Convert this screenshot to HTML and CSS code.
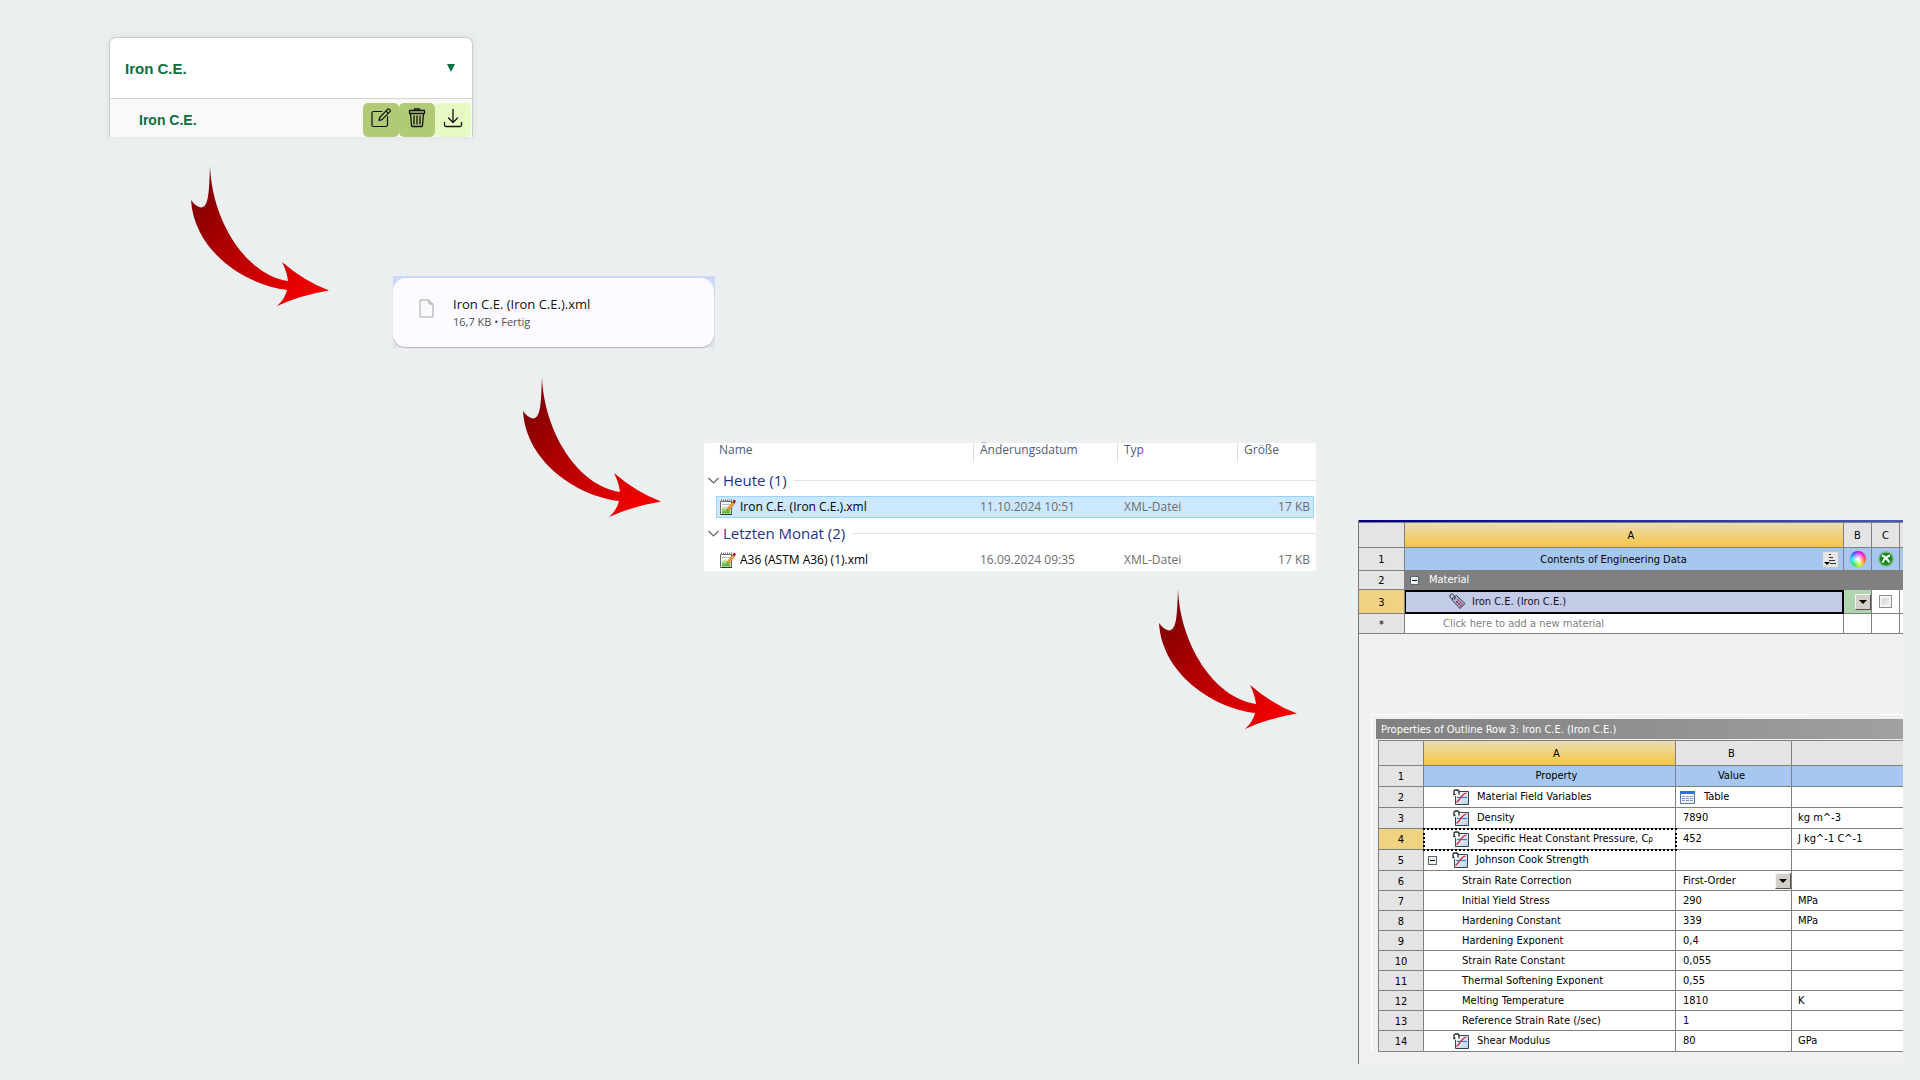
FILE: index.html
```html
<!DOCTYPE html>
<html lang="de">
<head>
<meta charset="utf-8">
<meta name="viewport" content="width=device-width, initial-scale=1">
<title>Material export workflow</title>
<link rel="stylesheet" href="styles.css">
</head>
<body>
<svg class="defs" width="0" height="0" aria-hidden="true">
  <defs>
    <linearGradient id="red" x1="0" y1="0" x2="1" y2="1">
      <stop offset="0.1" stop-color="#800000"/><stop offset="0.9" stop-color="#f40000"/>
    </linearGradient>
    <linearGradient id="green" x1="0" y1="0" x2="0" y2="1">
      <stop offset="0" stop-color="#f2fbd8"/><stop offset="1" stop-color="#3fae1c"/>
    </linearGradient>
    <linearGradient id="pale" x1="0" y1="0" x2="1" y2="1">
      <stop offset="0" stop-color="#fff"/><stop offset="1" stop-color="#bccfe4"/>
    </linearGradient>
    <symbol id="arrow" viewBox="0 0 160 155">
      <path fill="url(#red)" d="M30 5C32 60 66 114 108 120Q107 111 102 101Q124 120 149 129.500Q121 134 97 145Q105 138 107 129C65 124 14 90 11 39Q16 46 21 46.500C29 46 29 30 30 5Z"/>
    </symbol>
    <symbol id="notepad" viewBox="0 0 17 17">
      <path d="M1.500 2.500h11v13h-11z" fill="#fff" stroke="#666"/>
      <path d="M3 7h8.500v7.500H3z" fill="url(#green)"/>
      <path d="M2 1.500h11" stroke="#777" stroke-width="2" stroke-dasharray="1 1"/>
      <path d="M3 5.500h8" stroke="#bbb"/>
      <path d="M2 15.500h11" stroke="#333"/>
      <path d="M8 12l1-3 4.500-6 2 1.500L11 10.500z" fill="#f2a93b" stroke="#9a6318" stroke-width=".6"/>
      <path d="M13.500 3L15 .500l2 1.500-1.500 2.500z" fill="#a3152a"/>
    </symbol>
    <symbol id="prop" viewBox="0 0 16 16">
      <path d="M2.500 2.500h13v13h-13z" fill="url(#pale)" stroke="#31465e"/>
      <path d="M0 0h6v7H0z" fill="#fff"/>
      <path d="M4 8.500h10" stroke="#2c86e0" stroke-width="1.200"/>
      <path d="M3.500 13.500L6 11l2-3 3-3 2.500-1" fill="none" stroke="#d22a2a" stroke-width="1.300"/>
      <path d="M2.500 5.500H1V2.500Q1 1 2.500 1H4.500Q6 1 6 2.500V5.500" fill="none" stroke="#222" stroke-width="1.300"/>
    </symbol>
  </defs>
</svg>

<main class="canvas">
  <section class="node card">
    <button class="card-head" type="button"><span>Iron C.E.</span><span class="caret" aria-hidden="true"></span></button>
    <div class="card-row">
      <span class="card-item">Iron C.E.</span>
      <div class="actions">
        <button class="action" type="button" aria-label="Edit">
          <svg width="22" height="22" viewBox="0 0 22 22" fill="none" stroke="#111" stroke-width="1.200" stroke-linejoin="round" stroke-linecap="round"><path d="M12 4.500H3.500A1.500 1.500 0 0 0 2 6v12a1.500 1.500 0 0 0 1.500 1.500H16a1.500 1.500 0 0 0 1.500-1.500v-8.500M9 13.500l.700-3L17.500 2.300a1.300 1.300 0 0 1 1.900 0l.500.500a1.300 1.300 0 0 1 0 1.900L12 12.700zM16 4l2.300 2.300"/></svg>
        </button>
        <button class="action" type="button" aria-label="Delete">
          <svg width="22" height="22" viewBox="0 0 22 22" fill="none" stroke="#111" stroke-width="1.300" stroke-linejoin="round" stroke-linecap="round"><path d="M3.500 3.500h15v3h-15zM8.500 3.500V1.800h5v1.700M4.500 6.500l1 12a1.300 1.300 0 0 0 1.300 1h8.400a1.300 1.300 0 0 0 1.300-1l1-12M8 9v8M11 9v8M14 9v8"/></svg>
        </button>
        <button class="action action-light" type="button" aria-label="Download">
          <svg width="22" height="22" viewBox="0 0 22 22" fill="none" stroke="#111" stroke-width="1.300" stroke-linejoin="round" stroke-linecap="round"><path d="M11 2.500v13M6.500 11l4.500 4.500 4.500-4.500M2.500 15.500V18A1.500 1.500 0 0 0 4 19.500h14a1.500 1.500 0 0 0 1.500-1.500v-2.500"/></svg>
        </button>
      </div>
    </div>
  </section>

  <svg class="node arrow arrow-1" aria-hidden="true"><use href="#arrow"/></svg>

  <section class="node download">
    <div class="download-box">
      <svg width="15" height="19" viewBox="0 0 15 19" aria-hidden="true"><path d="M1 1h9l4 4v13H1z" fill="#f8f9f8" stroke="#a5a5a5"/><path d="M10 1v4h4" fill="#ddd" stroke="#a5a5a5"/></svg>
      <div>
        <div class="download-name">Iron C.E. (Iron C.E.).xml</div>
        <div class="download-info">16,7 KB • Fertig</div>
      </div>
    </div>
  </section>

  <svg class="node arrow arrow-2" aria-hidden="true"><use href="#arrow"/></svg>

  <section class="node explorer">
    <table class="files">
      <colgroup><col class="f-gutter"><col><col class="f-date"><col class="f-type"><col class="f-size"><col class="f-end"></colgroup>
      <thead>
        <tr><th></th><th class="f-name"><span>Name</span></th><th><span>Änderungsdatum</span></th><th><span>Typ</span></th><th><span>Größe</span></th><th></th></tr>
      </thead>
      <tbody>
        <tr class="group"><th colspan="6"><div><svg width="11" height="7" viewBox="0 0 11 7" aria-hidden="true"><path d="M.5 1l5 5 5-5" fill="none" stroke="#666" stroke-width="1.200"/></svg>Heute (1)</div></th></tr>
        <tr class="file selected"><td></td><td><div><svg width="17" height="17" aria-hidden="true"><use href="#notepad"/></svg>Iron C.E. (Iron C.E.).xml</div></td><td>11.10.2024 10:51</td><td>XML-Datei</td><td>17 KB</td><td></td></tr>
      </tbody>
      <tbody>
        <tr class="group second"><th colspan="6"><div><svg width="11" height="7" viewBox="0 0 11 7" aria-hidden="true"><path d="M.5 1l5 5 5-5" fill="none" stroke="#666" stroke-width="1.200"/></svg>Letzten Monat (2)</div></th></tr>
        <tr class="file"><td></td><td><div><svg width="17" height="17" aria-hidden="true"><use href="#notepad"/></svg>A36 (ASTM A36) (1).xml</div></td><td>16.09.2024 09:35</td><td>XML-Datei</td><td>17 KB</td><td></td></tr>
      </tbody>
    </table>
  </section>

  <svg class="node arrow arrow-3" aria-hidden="true"><use href="#arrow"/></svg>

  <section class="node engineering">
    <table class="sheet outline">
      <colgroup><col class="c-num"><col><col class="c-small"><col class="c-small"><col class="c-rest"></colgroup>
      <thead>
        <tr class="letters"><th></th><th class="active">A</th><th>B</th><th>C</th><th></th></tr>
        <tr class="titles o-title"><th class="num">1</th><th><div class="title-cell"><span>Contents of Engineering Data</span>
          <button class="filter" type="button" aria-label="Filter"><svg width="13" height="13" viewBox="0 0 13 13"><path d="M5 1.500h2M5 4.500h4M5 7.500h6M6 10.500h6" stroke="#333"/><path d="M0 9h6L3 12z" fill="#000"/></svg></button></div></th>
          <th><span class="wheel"></span></th>
          <th><svg class="mid" width="16" height="16" viewBox="0 0 16 16" aria-hidden="true"><circle cx="8" cy="8" r="7" fill="#168a1d" stroke="#7fae7f" stroke-width="1.500"/><path d="M4 4.500c3 1 5.500 3.500 7.500 7M12 4.500C9 5.500 6 8 4.500 11.500" fill="none" stroke="#fff" stroke-width="2"/></svg></th><th></th></tr>
      </thead>
      <tbody>
        <tr class="material"><th class="num">2</th><td colspan="4"><div class="cell"><button class="toggle" type="button" aria-label="Collapse Material"></button>Material</div></td></tr>
        <tr class="chosen"><th class="num active-num">3</th><td class="picked"><div class="cell cell-tag"><svg width="17" height="17" viewBox="0 0 17 17" aria-hidden="true"><path d="M3.500 5L7.500 2.500l8.500 8-5 5-7.500-8z" fill="#aab6d8" stroke="#333b55"/><path d="M8 6l6 5.500M7 8l5.500 5.500M10 7L7 10M12 9l-3.500 3.500M14 11l-3 3.500" stroke="#a03050" stroke-width=".9"/><path d="M6 6.500C6 0 1 0 1 3S3.500 6 3.500 6" fill="none" stroke="#222"/></svg>Iron C.E. (Iron C.E.)</div></td>
          <td class="source"><button class="drop" type="button" aria-label="Source"></button></td><td><input class="check" type="checkbox" aria-label="Suppress"></td><td></td></tr>
        <tr class="o-new"><th class="num">*</th><td class="hint">Click here to add a new material</td><td></td><td></td><td></td></tr>
      </tbody>
    </table>

    <div class="props">
      <h2 class="props-title">Properties of Outline Row 3: Iron C.E. (Iron C.E.)</h2>
      <table class="sheet property">
        <colgroup><col class="c-num"><col class="c-prop"><col class="c-value"><col></colgroup>
        <thead>
          <tr class="letters"><th></th><th class="active">A</th><th class="value-title">B</th><th></th></tr>
          <tr class="titles tall"><th class="num">1</th><th class="prop-title">Property</th><th class="value-title">Value</th><th></th></tr>
        </thead>
        <tbody>
          <tr class="tall"><th class="num">2</th><td><div class="cell cell-icon"><svg width="16" height="16" aria-hidden="true"><use href="#prop"/></svg>Material Field Variables</div></td><td><div class="cell cell-table"><svg width="15" height="13" viewBox="0 0 15 13" aria-hidden="true"><path d="M.5.500h14v12H.5z" fill="#f2f7ff" stroke="#5677b0"/><path d="M0 0h15v3H0z" fill="#2f6de0"/><path d="M2 5.500h11M2 7.500h11M2 9.500h11" stroke="#8a98b5" stroke-dasharray="3 1"/></svg>Table</div></td><td></td></tr>
          <tr class="tall"><th class="num">3</th><td><div class="cell cell-icon"><svg width="16" height="16" aria-hidden="true"><use href="#prop"/></svg>Density</div></td><td>7890</td><td>kg m^-3</td></tr>
          <tr class="tall"><th class="num active-num">4</th><td class="focused"><div class="cell cell-icon"><svg width="16" height="16" aria-hidden="true"><use href="#prop"/></svg><span>Specific Heat Constant Pressure, C<small>ρ</small></span></div></td><td>452</td><td>J kg^-1 C^-1</td></tr>
          <tr class="tall"><th class="num">5</th><td><div class="cell cell-open"><button class="toggle" type="button" aria-label="Collapse Johnson Cook Strength"></button><svg width="16" height="16" aria-hidden="true"><use href="#prop"/></svg>Johnson Cook Strength</div></td><td></td><td></td></tr>
          <tr><th class="num">6</th><td><label for="correction">Strain Rate Correction</label></td><td class="select-cell"><div class="select-box"><select id="correction"><option>First-Order</option></select><span class="drop" aria-hidden="true"></span></div></td><td></td></tr>
          <tr><th class="num">7</th><td>Initial Yield Stress</td><td>290</td><td>MPa</td></tr>
          <tr><th class="num">8</th><td>Hardening Constant</td><td>339</td><td>MPa</td></tr>
          <tr><th class="num">9</th><td>Hardening Exponent</td><td>0,4</td><td></td></tr>
          <tr><th class="num">10</th><td>Strain Rate Constant</td><td>0,055</td><td></td></tr>
          <tr><th class="num">11</th><td>Thermal Softening Exponent</td><td>0,55</td><td></td></tr>
          <tr><th class="num">12</th><td>Melting Temperature</td><td>1810</td><td>K</td></tr>
          <tr><th class="num">13</th><td>Reference Strain Rate (/sec)</td><td>1</td><td></td></tr>
          <tr class="tall"><th class="num">14</th><td><div class="cell cell-icon"><svg width="16" height="16" aria-hidden="true"><use href="#prop"/></svg>Shear Modulus</div></td><td>80</td><td>GPa</td></tr>
        </tbody>
      </table>
    </div>
  </section>
</main>
</body>
</html>
```
FILE: styles.css
```css
* { box-sizing: border-box; }
body { margin: 0; background: #ebeff0; color: #000; font-family: "Open Sans", "Noto Sans", sans-serif; font-size: 12px; }
button, select, input { margin: 0; padding: 0; border: 0; font: inherit; color: inherit; }
svg { display: block; flex: none; }
table { border-spacing: 0; table-layout: fixed; width: 100%; }
th, td { padding: 0; font-weight: 400; text-align: left; white-space: nowrap; }
.defs { position: absolute; }

/* free canvas holding the workflow steps */
.canvas { position: relative; min-height: 100vh; }
.node { position: absolute; }
.arrow { width: 160px; height: 155px; }
.arrow-1 { left: 180px; top: 161px; }
.arrow-2 { left: 512px; top: 372px; }
.arrow-3 { left: 1148px; top: 584px; }

/* material card */
.card { left: 109px; top: 37px; width: 364px; border: 1px solid #c8cccd; border-bottom: 0; border-radius: 7px 7px 0 0; background: #fff; color: #0a6e42; font-family: "Liberation Sans", Arial, sans-serif; font-weight: 700; box-shadow: 0 -1px 8px rgba(0, 0, 0, .07); }
.card-head { display: flex; width: 100%; height: 60px; align-items: center; justify-content: space-between; padding: 0 17px 0 15px; background: none; font-size: 15px; }
.caret { border: 4px solid transparent; border-top: 8px solid #0a6e42; border-bottom: 0; }
.card-row { display: flex; align-items: center; justify-content: space-between; height: 39px; padding: 4px 1px 0 29px; border-top: 1px solid #d2d5d5; background: #f9f9f9; font-size: 14px; }
.actions { display: flex; }
.action { display: flex; width: 36px; height: 34px; padding-bottom: 4px; align-items: center; justify-content: center; border-radius: 5px; background: #b1ca76; }
.action-light { background: #e8fac4; }

/* browser download entry */
.download { left: 393px; top: 276px; width: 322px; height: 72px; padding: 2px 1px 1px 0; background: linear-gradient(#c9d9f7 0 20px, #dfe3ec 21px); }
.download-box { display: flex; height: 100%; align-items: flex-start; gap: 19px; padding: 17px 26px; border-radius: 13px; background: #fdfbff; box-shadow: 0 1px 1px #b5b9bd; }
.download-box > svg { margin-top: 4px; }
.download-name { font-size: 13px; line-height: 18px; color: #111; }
.download-info { font-size: 11px; line-height: 18px; color: #505054; }

/* file list */
.explorer { left: 704px; top: 443px; width: 612px; background: #fff; }
.f-gutter { width: 12px; }
.f-date { width: 144px; }
.f-type { width: 120px; }
.f-size { width: 77px; }
.f-end { width: 2px; }
.files thead th { height: 23px; vertical-align: top; color: #4c607a; }
.files thead span { display: block; height: 19px; padding-left: 6px; border-left: 1px solid #dedede; line-height: 14px; }
.files thead .f-name span { padding-left: 3px; border: 0; }
.group th { height: 30px; vertical-align: top; }
.group.second th { height: 31px; padding-top: 1px; }
.group div { display: flex; align-items: center; gap: 4px; padding-left: 4px; color: #1e3287; font-size: 15px; line-height: 28px; }
.group div::after { content: ""; flex: 1; height: 1px; margin-left: 3px; background: #e2e2e2; }
.file td { height: 22px; color: #6d6d6d; line-height: 20px; padding-left: 7px; border: 1px solid transparent; border-width: 1px 0; }
.file td:first-child, .file td:last-child { padding: 0; border: 0; }
.file td:nth-child(2) { padding-left: 2px; border-left-width: 1px; color: #000; }
.file td:nth-child(5) { padding-right: 3px; border-right-width: 1px; text-align: right; }
.file div { display: flex; align-items: center; gap: 4px; }
.selected td:not(:first-child):not(:last-child) { background: #cce8ff; border-color: #99d1ff; }

/* engineering data window */
.engineering { left: 1358px; right: 17px; top: 520px; padding-bottom: 12px; border-left: 1px solid #777; background: #f0f0f0; font-family: "DejaVu Sans Condensed", "DejaVu Sans", sans-serif; font-stretch: condensed; font-size: 11px; }
.engineering::before { content: ""; display: block; height: 2px; background: linear-gradient(90deg, #00007f, #4a5ab4); }
.sheet { background: #fff; border-top: 1px solid #808080; }
.sheet th, .sheet td { height: 20px; border: 0 solid #808080; border-width: 0 1px 1px 0; line-height: 16px; overflow: hidden; }
.sheet th:last-child, .sheet td:last-child { border-right: 0; }
.c-num { width: 46px; }
.c-small { width: 28px; }
.c-rest { width: 3px; }
.c-prop { width: 252px; }
.c-value { width: 116px; }
.sheet .letters th { height: 25px; padding-top: 2px; background: #e4e4e4; text-align: center; }
.sheet .letters .active { padding-left: 14px; background: linear-gradient(#ebdcb4, #f5c544); }
.sheet .titles th { background: #a6c7f0; text-align: center; }
.sheet .titles .prop-title { padding-left: 14px; }
.sheet .value-title { padding-right: 4px; }
.sheet .num, .sheet .titles .num { background: #e4e4e4; text-align: center; padding-top: 2px; }
.sheet .active-num { background: #efd381; }
.sheet .tall th, .sheet .tall td { height: 21px; }
.outline .o-title th { height: 23px; }
.title-cell { display: flex; align-items: center; }
.title-cell span { flex: 1; padding-top: 2px; }
.filter { display: flex; width: 17px; height: 17px; margin-right: 4px; align-items: center; justify-content: center; border: 1px solid #bcc4cd; border-radius: 2px; background: #e6e6e6; }
.wheel { display: block; width: 16px; height: 16px; margin: auto; border-radius: 50%; background: radial-gradient(#fff 5%, transparent 70%), conic-gradient(#b0f, #f0a 15%, #f33 25%, #f90 35%, #cf0 45%, #0e3 60%, #0df 75%, #33f 90%, #b0f); }
.mid { margin: auto; }
.outline .material th { height: 19px; }
.outline .material td { height: 19px; background: #808080; color: #fff; }
.outline .chosen th, .outline .chosen td { height: 24px; }
.outline .chosen .picked { background: #c3cbe7; border-color: #000; box-shadow: inset 1px 1px #000, inset 0 2px #000, inset -1px -1px #000; color: #101030; }
.outline .source { background: #b0d3b0; }
.outline .source .drop { margin-left: auto; }
.outline .hint { padding-left: 38px; color: #808080; }
.cell { display: flex; align-items: center; gap: 10px; padding-left: 5px; }
.cell-tag { gap: 6px; padding-left: 44px; }
.toggle { display: block; width: 9px; height: 9px; border: 1px solid #53677e; background: #f4f2e8; flex: none; }
.toggle::after { content: ""; display: block; height: 1px; margin: 3px 1px; background: #000; }
.drop { display: flex; width: 16px; height: 16px; flex: none; align-items: center; justify-content: center; border: 1px solid; border-color: #f4f4f4 #505050 #505050 #f4f4f4; background: #d4d0c8; }
.drop::after { content: ""; border: 4px solid transparent; border-top-color: #000; border-bottom: 0; }
.check { display: block; width: 13px; height: 13px; margin: auto; appearance: none; border: 1px solid #8e8f8f; background: linear-gradient(135deg, #c5cad2, #fafafa); box-shadow: inset 0 0 0 2px #f4f4f4; }

.props { margin: 80px 0 0 12px; padding: 4px 0 0 4px; border: 1px solid #fff; border-width: 1px 0 0 1px; }
.props-title { height: 20px; margin: 0; padding-left: 5px; background: linear-gradient(90deg, #808080, #a0a0a0); color: #fff; font-size: 11px; font-weight: 400; line-height: 21px; white-space: nowrap; }
.property { width: calc(100% - 2px); margin: 1px 0 0 2px; border-left: 1px solid #808080; }
.property .c-num { width: 45px; }
.property td { padding-left: 38px; }
.property td:nth-child(3) { padding-left: 7px; }
.property td:nth-child(4) { padding-left: 6px; }
.property td:has(.cell) { padding-left: 0; }
.cell-icon { gap: 8px; padding-left: 29px; }
.cell-open { gap: 8px; padding-left: 5px; }
.cell-open .toggle { margin-right: 7px; margin-left: -1px; }
.cell-table { gap: 9px; padding-left: 4px; }
.property .focused { outline: 2px dotted #000; outline-offset: -1px; }
.focused small { font-size: 8px; }
.property .select-cell { padding-left: 5px; }
.select-box { display: flex; align-items: center; }
select { flex: 1; min-width: 0; appearance: none; background: none; }
```
